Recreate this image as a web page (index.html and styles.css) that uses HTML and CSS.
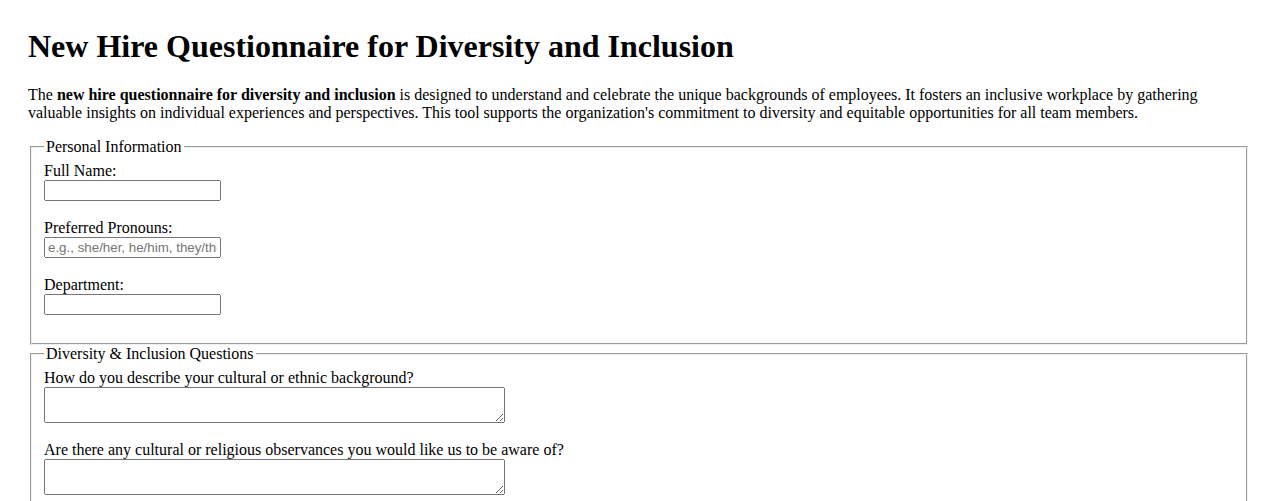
FILE: index.html
```html
<!DOCTYPE html>
<html lang="en">
<head>
<meta charset="utf-8">
<title>New Hire Questionnaire for Diversity and Inclusion</title>
<link rel="stylesheet" href="styles.css">
</head>
<body>
<h1 class="title">New Hire Questionnaire for Diversity and Inclusion</h1>
<p class="intro">The <strong>new hire questionnaire for diversity and inclusion</strong> is designed to understand and celebrate the unique backgrounds of employees. It fosters an inclusive workplace by gathering valuable insights on individual experiences and perspectives. This tool supports the organization's commitment to diversity and equitable opportunities for all team members.</p>
<form class="form">
  <fieldset class="section">
    <legend>Personal Information</legend>
    <div class="group">
      <label class="label" for="name">Full Name:</label>
      <input class="field" type="text" id="name">
    </div>
    <div class="group">
      <label class="label" for="pronouns">Preferred Pronouns:</label>
      <input class="field" type="text" id="pronouns" placeholder="e.g., she/her, he/him, they/them">
    </div>
    <div class="group">
      <label class="label" for="dept">Department:</label>
      <input class="field" type="text" id="dept">
    </div>
  </fieldset>
  <fieldset class="section">
    <legend>Diversity &amp; Inclusion Questions</legend>
    <div class="group">
      <label class="label" for="bg">How do you describe your cultural or ethnic background?</label>
      <textarea class="area" id="bg" rows="2"></textarea>
    </div>
    <div class="group">
      <label class="label" for="obs">Are there any cultural or religious observances you would like us to be aware of?</label>
      <textarea class="area" id="obs" rows="2"></textarea>
    </div>
  </fieldset>
</form>
</body>
</html>
```
FILE: styles.css
```css
body {
  margin: 8px;
  padding: 20px;
  font-family: "Liberation Serif", "Times New Roman", serif;
  font-size: 16px;
  color: #000;
  background: #fff;
}
.title {
  margin-top: 0;
}
.intro {
  margin: 16px 0;
}
.form {
  margin: 0;
}
.section {
  margin: 0 2px;
}
.group {
  margin-bottom: 14px;
}
.label {
  display: block;
}
.field {
  font-family: "Liberation Sans", Arial, sans-serif;
  font-size: 13.333px;
  width: 177px;
  box-sizing: border-box;
  margin-bottom: 4px;
}
.area {
  font-family: "Liberation Mono", monospace;
  font-size: 13.333px;
  width: 461px;
  height: 36px;
  box-sizing: border-box;
}
```
